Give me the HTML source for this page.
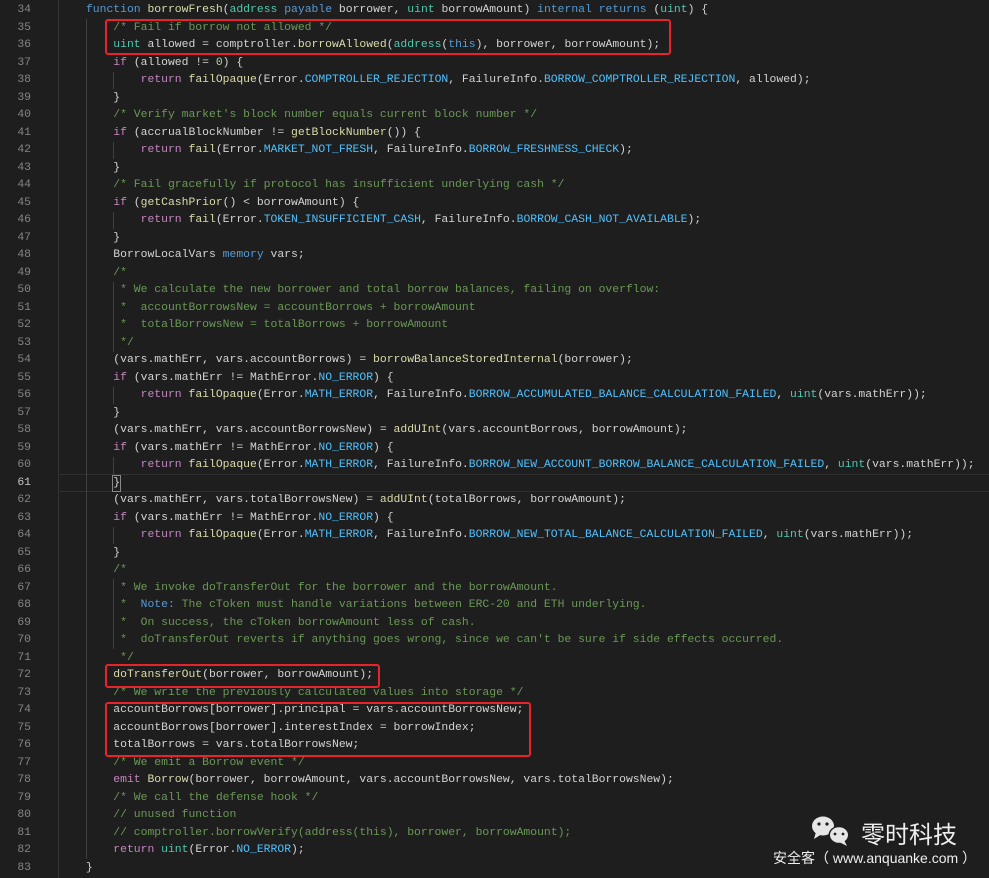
<!DOCTYPE html>
<html><head><meta charset="utf-8"><style>
body{margin:0;width:989px;height:878px;background:#1e1e1e;overflow:hidden;position:relative;font-family:"Liberation Mono",monospace;font-size:11.4px;color:#d4d4d4}
.ln{position:absolute;left:0;width:31px;text-align:right;color:#858585;height:17.5px;line-height:17.5px}
.l{position:absolute;left:58.6px;white-space:pre;height:17.5px;line-height:17.5px}
.k{color:#569cd6}.t{color:#4ec9b0}.f{color:#dcdcaa}.c{color:#6a9955}.p{color:#c586c0}.n{color:#b5cea8}.e{color:#4fc1ff}
.g{position:absolute;width:1px;background:#404040}
.box{position:absolute;border:2px solid #e8232a;border-radius:3px}
</style></head><body>
<div style="position:absolute;left:58px;top:0;width:1px;height:878px;background:#333"></div>
<div style="position:absolute;left:58px;top:474px;width:931px;height:16px;border-top:1px solid #303030;border-bottom:1px solid #303030"></div>
<div class="g" style="left:86px;top:19px;height:840px"></div>
<div class="g" style="left:113px;top:72px;height:17px"></div>
<div class="g" style="left:113px;top:142px;height:17px"></div>
<div class="g" style="left:113px;top:212px;height:17px"></div>
<div class="g" style="left:113px;top:282px;height:70px"></div>
<div class="g" style="left:113px;top:387px;height:17px"></div>
<div class="g" style="left:113px;top:457px;height:17px"></div>
<div class="g" style="left:113px;top:527px;height:17px"></div>
<div class="g" style="left:113px;top:579px;height:70px"></div>
<div style="position:absolute;left:112px;top:475px;width:7px;height:15px;border:1px solid #888"></div>
<div id="code"></div>
<div class="box" style="left:105px;top:19px;width:562px;height:32px"></div>
<div class="box" style="left:105px;top:664px;width:271px;height:20px"></div>
<div class="box" style="left:105px;top:702px;width:422px;height:51px"></div>
<svg style="position:absolute;left:810px;top:813px" width="42" height="36" viewBox="0 0 42 36">
<ellipse cx="13" cy="13" rx="11" ry="9.5" fill="#e6e6e6"/><path d="M6 19 L4 26 L12 21Z" fill="#e6e6e6"/>
<ellipse cx="29" cy="22" rx="10.5" ry="9" fill="#1e1e1e"/>
<ellipse cx="29" cy="22" rx="9" ry="7.8" fill="#e6e6e6"/><path d="M34 27 L37 33 L29 29Z" fill="#e6e6e6"/>
<circle cx="9" cy="11" r="1.6" fill="#1e1e1e"/><circle cx="17" cy="11" r="1.6" fill="#1e1e1e"/>
<circle cx="25" cy="21" r="1.4" fill="#1e1e1e"/><circle cx="33" cy="21" r="1.4" fill="#1e1e1e"/>
</svg>
<div style="position:absolute;left:861px;top:818px;font-family:'Noto Sans CJK SC',sans-serif;font-size:24px;line-height:30px;color:#eee">零时科技</div>
<div style="position:absolute;left:773px;top:849px;font-family:'Liberation Sans','Noto Sans CJK SC',sans-serif;font-size:14px;line-height:18px;color:#eee;white-space:nowrap">安全客（ www.anquanke.com ）</div>
<script>
var L=[
'    <span class="k">function</span> <span class="f">borrowFresh</span>(<span class="t">address</span> <span class="k">payable</span> borrower, <span class="t">uint</span> borrowAmount) <span class="k">internal</span> <span class="k">returns</span> (<span class="t">uint</span>) {',
'        <span class="c">/* Fail if borrow not allowed */</span>',
'        <span class="t">uint</span> allowed = comptroller.<span class="f">borrowAllowed</span>(<span class="t">address</span>(<span class="k">this</span>), borrower, borrowAmount);',
'        <span class="p">if</span> (allowed != <span class="n">0</span>) {',
'            <span class="p">return</span> <span class="f">failOpaque</span>(Error.<span class="e">COMPTROLLER_REJECTION</span>, FailureInfo.<span class="e">BORROW_COMPTROLLER_REJECTION</span>, allowed);',
'        }',
'        <span class="c">/* Verify market\'s block number equals current block number */</span>',
'        <span class="p">if</span> (accrualBlockNumber != <span class="f">getBlockNumber</span>()) {',
'            <span class="p">return</span> <span class="f">fail</span>(Error.<span class="e">MARKET_NOT_FRESH</span>, FailureInfo.<span class="e">BORROW_FRESHNESS_CHECK</span>);',
'        }',
'        <span class="c">/* Fail gracefully if protocol has insufficient underlying cash */</span>',
'        <span class="p">if</span> (<span class="f">getCashPrior</span>() &lt; borrowAmount) {',
'            <span class="p">return</span> <span class="f">fail</span>(Error.<span class="e">TOKEN_INSUFFICIENT_CASH</span>, FailureInfo.<span class="e">BORROW_CASH_NOT_AVAILABLE</span>);',
'        }',
'        BorrowLocalVars <span class="k">memory</span> vars;',
'        <span class="c">/*</span>',
'<span class="c">         * We calculate the new borrower and total borrow balances, failing on overflow:</span>',
'<span class="c">         *  accountBorrowsNew = accountBorrows + borrowAmount</span>',
'<span class="c">         *  totalBorrowsNew = totalBorrows + borrowAmount</span>',
'<span class="c">         */</span>',
'        (vars.mathErr, vars.accountBorrows) = <span class="f">borrowBalanceStoredInternal</span>(borrower);',
'        <span class="p">if</span> (vars.mathErr != MathError.<span class="e">NO_ERROR</span>) {',
'            <span class="p">return</span> <span class="f">failOpaque</span>(Error.<span class="e">MATH_ERROR</span>, FailureInfo.<span class="e">BORROW_ACCUMULATED_BALANCE_CALCULATION_FAILED</span>, <span class="t">uint</span>(vars.mathErr));',
'        }',
'        (vars.mathErr, vars.accountBorrowsNew) = <span class="f">addUInt</span>(vars.accountBorrows, borrowAmount);',
'        <span class="p">if</span> (vars.mathErr != MathError.<span class="e">NO_ERROR</span>) {',
'            <span class="p">return</span> <span class="f">failOpaque</span>(Error.<span class="e">MATH_ERROR</span>, FailureInfo.<span class="e">BORROW_NEW_ACCOUNT_BORROW_BALANCE_CALCULATION_FAILED</span>, <span class="t">uint</span>(vars.mathErr));',
'        }',
'        (vars.mathErr, vars.totalBorrowsNew) = <span class="f">addUInt</span>(totalBorrows, borrowAmount);',
'        <span class="p">if</span> (vars.mathErr != MathError.<span class="e">NO_ERROR</span>) {',
'            <span class="p">return</span> <span class="f">failOpaque</span>(Error.<span class="e">MATH_ERROR</span>, FailureInfo.<span class="e">BORROW_NEW_TOTAL_BALANCE_CALCULATION_FAILED</span>, <span class="t">uint</span>(vars.mathErr));',
'        }',
'        <span class="c">/*</span>',
'<span class="c">         * We invoke doTransferOut for the borrower and the borrowAmount.</span>',
'<span class="c">         *  </span><span class="k">Note:</span><span class="c"> The cToken must handle variations between ERC-20 and ETH underlying.</span>',
'<span class="c">         *  On success, the cToken borrowAmount less of cash.</span>',
'<span class="c">         *  doTransferOut reverts if anything goes wrong, since we can\'t be sure if side effects occurred.</span>',
'<span class="c">         */</span>',
'        <span class="f">doTransferOut</span>(borrower, borrowAmount);',
'        <span class="c">/* We write the previously calculated values into storage */</span>',
'        accountBorrows[borrower].principal = vars.accountBorrowsNew;',
'        accountBorrows[borrower].interestIndex = borrowIndex;',
'        totalBorrows = vars.totalBorrowsNew;',
'        <span class="c">/* We emit a Borrow event */</span>',
'        <span class="p">emit</span> <span class="f">Borrow</span>(borrower, borrowAmount, vars.accountBorrowsNew, vars.totalBorrowsNew);',
'        <span class="c">/* We call the defense hook */</span>',
'        <span class="c">// unused function</span>',
'        <span class="c">// comptroller.borrowVerify(address(this), borrower, borrowAmount);</span>',
'        <span class="p">return</span> <span class="t">uint</span>(Error.<span class="e">NO_ERROR</span>);',
'    }'];
var h='';
for(var i=0;i<L.length;i++){var y=2+i*17.5;var n=34+i;
h+='<div class="ln" style="top:'+y+'px;'+(n==61?'color:#c6c6c6':'')+'">'+n+'</div><div class="l" style="top:'+y+'px">'+L[i]+'</div>';}
document.getElementById('code').innerHTML=h;
</script>
</body></html>
